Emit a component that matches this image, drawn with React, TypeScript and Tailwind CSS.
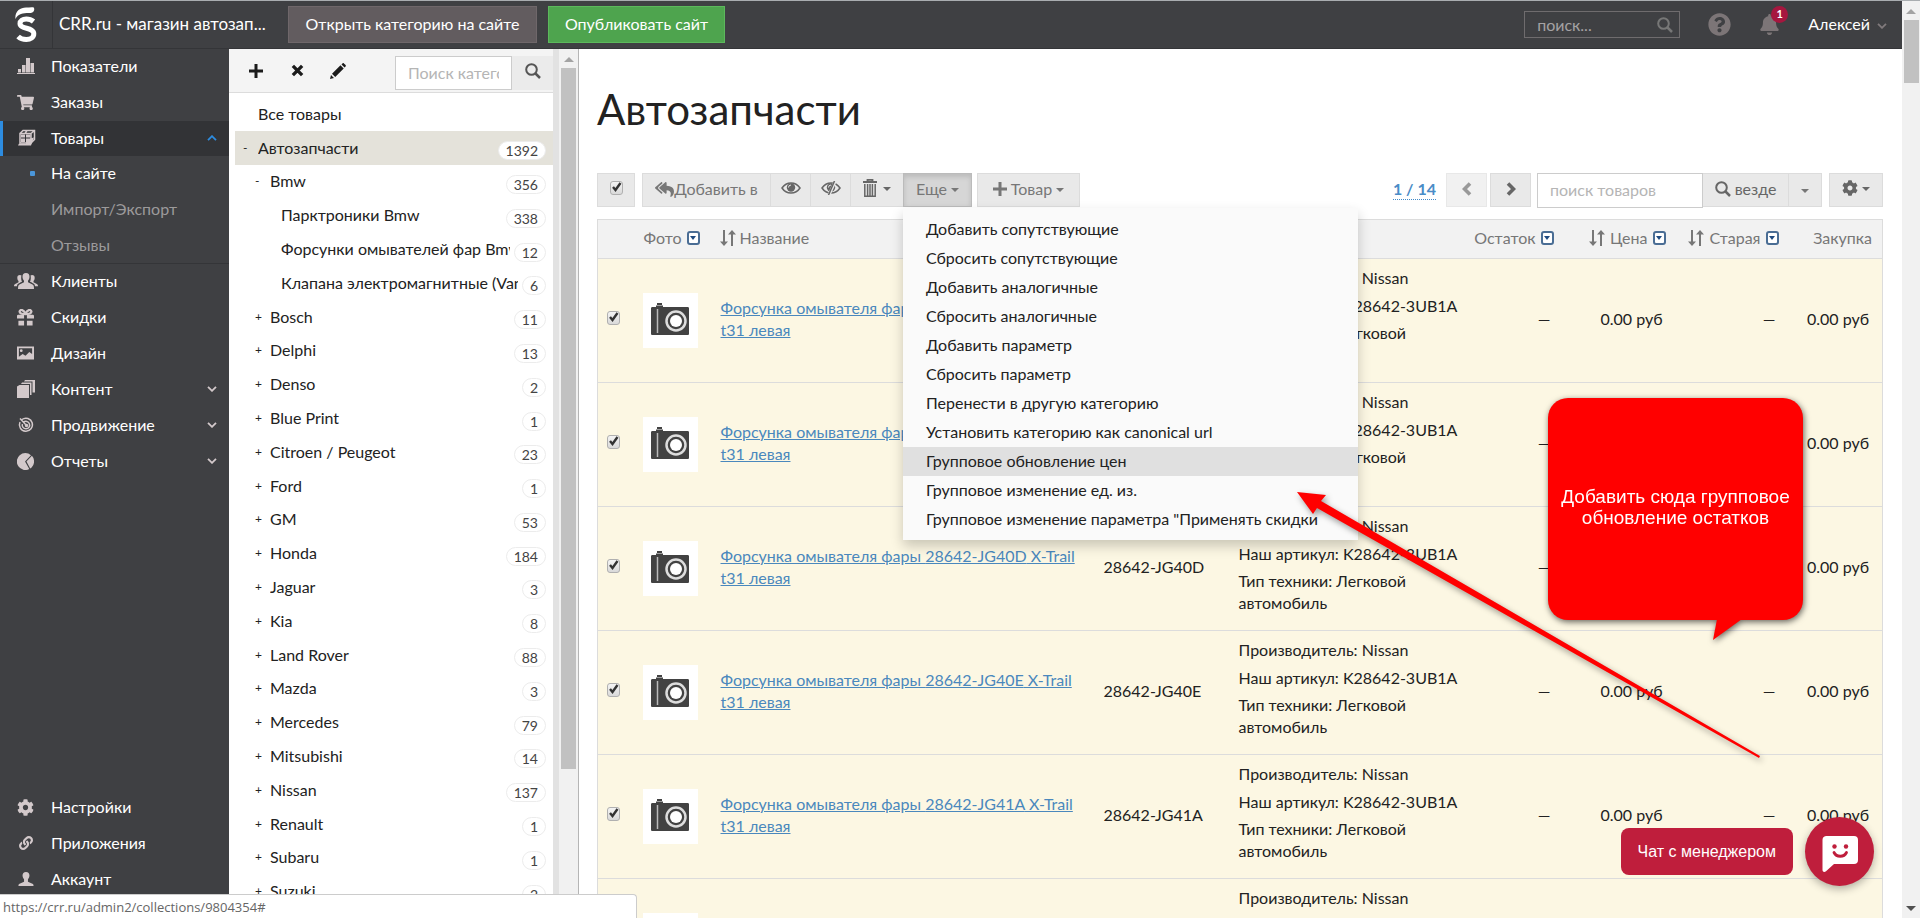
import type { ReactNode } from "react";
import { FaBell, FaCog, FaLink, FaQuestionCircle, FaReplyAll, FaShoppingCart } from "react-icons/fa";

type IconProps = { className?: string };

function Logo() {
  return (
    <svg viewBox="0 0 22 36" className="h-9 w-[22px]" fill="none" stroke="#fff">
      <path d="M.4 12C-.2 4.5 5 .6 11 .6c3 0 5.500-.8 7.800-.1 1.200 2.200 0 5.500-3 5.500C10 6 3.500 5.500.4 12Z" fill="#fff" stroke="none" />
      <path d="M18.500 14.500C16.500 12.800 13.800 12 11.300 12c-3.800 0-6.300 1.700-6.300 4.500 0 6.200 13.800 3.300 13.800 10.300 0 3.700-3.300 5.700-7.500 5.700-3.300 0-6.200-1-8.200-3" strokeWidth="5" />
    </svg>
  );
}

function BarsIcon({ className }: IconProps) {
  return (
    <svg viewBox="0 0 18 18" className={className} fill="currentColor">
      <path d="M0 16h18v1H0zM1 12h3v3.500H1zM5 8h3.500v7.500H5zM9 1h4v14.500H9zM13.500 6h3.500v9.500h-3.500z" />
    </svg>
  );
}

function BoxIcon({ className }: IconProps) {
  return (
    <svg viewBox="0 0 18 18" className={className} fill="none" stroke="currentColor">
      <path d="M2 4.500h11v9.500H2zM2 4.500l3-3h11.500v9l-3.500 3.500M13 4.500l3.500-3M9 1.500L7 4.500" strokeWidth="1.500" />
      <path d="M3 5.500h4v3H3zM8 5.500h4.500v3H8zM3 9.500h4v3.500H3zM8 9.500h4l4-1-3 8H0l1-2h7z" fill="currentColor" stroke="none" />
    </svg>
  );
}

function UsersIcon({ className }: IconProps) {
  return (
    <svg viewBox="0 0 24 16" className={className} fill="currentColor">
      <path d="M12 0c2.400 0 3.600 1.600 3.500 4-.1 1.700-.8 3-1.500 3.700v1.500l4.500 2.300c1 .6 1.500 1.500 1.500 4.500H4c0-3 .5-3.900 1.500-4.500L10 9.200V7.700C9.300 7 8.600 5.700 8.500 4 8.400 1.600 9.600 0 12 0Z" />
      <path d="M6 2C4.100 2 3.200 3.300 3.300 5c.1 1.500.6 2.500 1.200 3v1.200L1.200 11C.3 11.500 0 12 0 13.200h3C3.300 11 4 10.500 8 8.700 7 7 7 4 7.500 2.500ZM18 2c1.900 0 2.800 1.300 2.700 3-.1 1.500-.6 2.500-1.200 3v1.200l3.300 1.800c.9.500 1.200 1 1.200 2.200h-3c-.3-2.200-1-2.700-5-4.500 1-1.700 1-4.700.5-6.200Z" />
    </svg>
  );
}

function GiftIcon({ className }: IconProps) {
  return (
    <svg viewBox="0 0 18 18" className={className} fill="currentColor">
      <path d="M1.500 12.500h6v5h-6zM10.500 12.500h6v5h-6zM1 6h6.500v4H0V7zM10.500 6H17l1 1v3h-7.500z" />
      <path d="M9 5C7 .5 3.500 0 2.800 2.500 2.500 4.500 5 5.500 9 5.500ZM9 5c2-4.500 5.500-5 6.200-2.500C15.500 4.500 13 5.500 9 5.500Z" fill="none" stroke="currentColor" strokeWidth="2.400" />
    </svg>
  );
}

function PictureIcon({ className }: IconProps) {
  return (
    <svg viewBox="0 0 18 18" className={className} fill="currentColor">
      <path fillRule="evenodd" d="M0 2h18v14H0zM2 4v9l4-3 3 2 4-4 3 2V4zM4.500 5a1.500 1.500 0 1 1 0 3 1.500 1.500 0 0 1 0-3Z" />
    </svg>
  );
}

function StackIcon({ className }: IconProps) {
  return (
    <svg viewBox="0 0 18 18" className={className} fill="currentColor">
      <path d="M0 6.500L2.500 5H12v13H0zM4 4l1-1.500h9.500V15H13V4zM7 1.500L8 0h10v12.500h-2.500v-11z" />
    </svg>
  );
}

function TargetIcon({ className }: IconProps) {
  return (
    <svg viewBox="0 0 18 18" className={className} fill="none" stroke="currentColor" strokeWidth="1.500">
      <path d="M5 3.500A6.500 6.500 0 1 1 3 6M6.500 6.300A3.700 3.700 0 1 1 5.400 8M3 2.500l6.500 7" />
      <circle cx="9.500" cy="9.500" r="1" fill="currentColor" />
    </svg>
  );
}

function PieIcon({ className }: IconProps) {
  return (
    <svg viewBox="0 0 18 18" className={className} fill="currentColor">
      <path d="M8.500 9l4.500 8a9 9 0 1 1 1.800-14.700zM10 9l5.800-6A9 9 0 0 1 15.500 15.300l-1.500 1z" />
    </svg>
  );
}

function UserIcon({ className }: IconProps) {
  return (
    <svg viewBox="0 0 18 18" className={className} fill="currentColor">
      <path d="M9 1c2.600 0 4 1.700 3.900 4.200-.1 1.900-.9 3.400-1.700 4.200V12l5 2.300c1 .5 1.300 1.200 1.300 2.700H.5c0-1.500.3-2.200 1.300-2.700l5-2.300V9.400C6 8.600 5.200 7.100 5.100 5.200 5 2.700 6.400 1 9 1Z" />
    </svg>
  );
}

function PlusIcon({ className }: IconProps) {
  return (
    <svg viewBox="0 0 14 14" className={className} fill="none" stroke="currentColor" strokeWidth="3">
      <path d="M7 0v14M0 7h14" />
    </svg>
  );
}

function CrossIcon({ className }: IconProps) {
  return (
    <svg viewBox="0 0 14 14" className={className} fill="none" stroke="currentColor" strokeWidth="3.600">
      <path d="M2 2l10 10M12 2L2 12" />
    </svg>
  );
}

function PencilIcon({ className }: IconProps) {
  return (
    <svg viewBox="0 0 16 16" className={className} fill="currentColor">
      <path d="M0 16l1-4 3 3zM2 10.700l8.500-8.400 3.200 3.200L5.200 14zM11.500 1.500l1-1c.4-.5 1-.5 1.400-.1l1.700 1.700c.4.400.4 1 0 1.400l-1 1z" />
    </svg>
  );
}

function SearchIcon({ className }: IconProps) {
  return (
    <svg viewBox="0 0 16 16" className={className} fill="none" stroke="currentColor" strokeWidth="2">
      <circle cx="6.500" cy="6.500" r="5.300" />
      <path d="M10.500 10.500l4.500 4.500" strokeWidth="2.500" />
    </svg>
  );
}

function EyeIcon({ className, off }: IconProps & { off?: boolean }) {
  return (
    <svg viewBox="0 0 20 14" className={className} fill="none" stroke="currentColor">
      <path d="M1 7c4.500-6.700 13.500-6.700 18 0-4.500 6.700-13.500 6.700-18 0Z" strokeWidth="1.500" />
      <circle cx="10" cy="6.500" r="4.200" fill="currentColor" stroke="none" />
      <path d="M7.500 6.500A2.500 2.500 0 0 1 10 4" stroke="#e9e9e9" />
      {off && <path d="M14.300 0L8 14" stroke="#e9e9e9" strokeWidth="3" />}
      {off && <path d="M13.500 0L7.500 14" strokeWidth="1.500" />}
    </svg>
  );
}

function TrashIcon({ className }: IconProps) {
  return (
    <svg viewBox="0 0 14 18" className={className} fill="none" stroke="currentColor">
      <path d="M0 3h14M4.500 2.500V.8h5v1.700" strokeWidth="1.800" />
      <path d="M1.800 5v12.200h10.400V5M4.600 5v12M7 5v12M9.400 5v12" strokeWidth="1.500" />
    </svg>
  );
}

function SortIcon() {
  return (
    <svg viewBox="0 0 16 18" className="h-[18px] w-4" fill="none" stroke="currentColor" strokeWidth="2">
      <path d="M4 1v13M12 17V4" />
      <path d="M0 12.500h8L4 17zM8 5.500h8L12 1z" fill="currentColor" stroke="none" />
    </svg>
  );
}

function Chevron({ className }: IconProps) {
  return (
    <svg viewBox="0 0 10 6" className={className} fill="none" stroke="currentColor" strokeWidth="1.800">
      <path d="M1 .8l4 4 4-4" />
    </svg>
  );
}

function PageArrow({ className }: IconProps) {
  return (
    <svg viewBox="0 0 10 14" className={className} fill="none" stroke="currentColor" strokeWidth="3.600">
      <path d="M2 1.500L7.500 7 2 12.500" />
    </svg>
  );
}

function Caret() {
  return (
    <svg viewBox="0 0 8 4" className="mt-0.5 h-1 w-2" fill="currentColor">
      <path d="M0 0h8L4 4z" />
    </svg>
  );
}

function CameraIcon() {
  return (
    <svg viewBox="0 0 38 34" className="h-[34px] w-[38px]">
      <path d="M6 1h5v2H6zM5 3.500h7V6H5zM1.500 5h35C37.500 5 38 5.500 38 6.500v25c0 1-.5 1.500-1.500 1.500h-35C.5 33 0 32.500 0 31.500v-25C0 5.500.5 5 1.500 5Z" fill="#424242" />
      <path d="M6.500 7v24" stroke="#bbb" strokeWidth="1.500" />
      <circle cx="25" cy="19" r="9.500" fill="none" stroke="#ddd" strokeWidth="2.500" />
      <circle cx="25" cy="19" r="6" fill="#fff" />
    </svg>
  );
}

function CheckBox({ label }: { label: string }) {
  return (
    <label className="relative block h-[14px] w-[13px]">
      <input
        type="checkbox"
        defaultChecked
        aria-label={label}
        className="peer block h-[14px] w-[13px] appearance-none rounded-[3px] border border-[#b0b0b0] bg-gradient-to-b from-[#f4f4f4] to-[#d9d9d9]"
      />
      <svg viewBox="0 0 12 12" className="absolute top-0 left-0 hidden h-3 w-3 peer-checked:block" fill="none" stroke="#333" strokeWidth="2.400">
        <path d="M3 6l2.500 3L10.500 2" />
      </svg>
    </label>
  );
}

function FilterButton({ label }: { label: string }) {
  return (
    <button aria-label={label} className="flex h-[14px] w-[13px] items-center justify-center rounded-[3px] border-2 border-[#4a6d94] bg-white text-[#1f4a80]">
      <svg viewBox="0 0 6 4" className="h-1 w-1.5" fill="currentColor">
        <path d="M0 0h6L3 4z" />
      </svg>
    </button>
  );
}

type MenuItem = {
  label: string;
  icon: ReactNode;
  arrow?: boolean;
};

const MAIN_MENU: MenuItem[] = [
  { label: "Клиенты", icon: <UsersIcon className="h-4 w-6" /> },
  { label: "Скидки", icon: <GiftIcon className="h-[17px] w-[17px]" /> },
  { label: "Дизайн", icon: <PictureIcon className="h-[18px] w-[17px]" /> },
  { label: "Контент", icon: <StackIcon className="h-[18px] w-[18px]" />, arrow: true },
  { label: "Продвижение", icon: <TargetIcon className="h-[18px] w-[18px]" />, arrow: true },
  { label: "Отчеты", icon: <PieIcon className="h-[17px] w-[17px]" />, arrow: true },
];

const BOTTOM_MENU: MenuItem[] = [
  { label: "Настройки", icon: <FaCog size={17} /> },
  { label: "Приложения", icon: <FaLink size={14} /> },
  { label: "Аккаунт", icon: <UserIcon className="h-4 w-4" /> },
];

const CATEGORIES = [
  { name: "Все товары", level: 0, toggle: "", count: "" },
  { name: "Автозапчасти", level: 0, toggle: "-", count: "1392" },
  { name: "Bmw", level: 1, toggle: "-", count: "356" },
  { name: "Парктроники Bmw", level: 2, toggle: "", count: "338" },
  { name: "Форсунки омывателей фар Bmw", level: 2, toggle: "", count: "12" },
  { name: "Клапана электромагнитные (Vanos)", level: 2, toggle: "", count: "6" },
  { name: "Bosch", level: 1, toggle: "+", count: "11" },
  { name: "Delphi", level: 1, toggle: "+", count: "13" },
  { name: "Denso", level: 1, toggle: "+", count: "2" },
  { name: "Blue Print", level: 1, toggle: "+", count: "1" },
  { name: "Citroen / Peugeot", level: 1, toggle: "+", count: "23" },
  { name: "Ford", level: 1, toggle: "+", count: "1" },
  { name: "GM", level: 1, toggle: "+", count: "53" },
  { name: "Honda", level: 1, toggle: "+", count: "184" },
  { name: "Jaguar", level: 1, toggle: "+", count: "3" },
  { name: "Kia", level: 1, toggle: "+", count: "8" },
  { name: "Land Rover", level: 1, toggle: "+", count: "88" },
  { name: "Mazda", level: 1, toggle: "+", count: "3" },
  { name: "Mercedes", level: 1, toggle: "+", count: "79" },
  { name: "Mitsubishi", level: 1, toggle: "+", count: "14" },
  { name: "Nissan", level: 1, toggle: "+", count: "137" },
  { name: "Renault", level: 1, toggle: "+", count: "1" },
  { name: "Subaru", level: 1, toggle: "+", count: "1" },
  { name: "Suzuki", level: 1, toggle: "+", count: "2" },
];

const LEVEL_INDENT = ["pl-2", "pl-5", "pl-[31px]"];

const ACTIONS = [
  "Добавить сопутствующие",
  "Сбросить сопутствующие",
  "Добавить аналогичные",
  "Сбросить аналогичные",
  "Добавить параметр",
  "Сбросить параметр",
  "Перенести в другую категорию",
  "Установить категорию как canonical url",
  "Групповое обновление цен",
  "Групповое изменение ед. из.",
  'Групповое изменение параметра "Применять скидки',
];
const ACTIVE_ACTION = "Групповое обновление цен";

const PRODUCTS = ["28642-JG40B", "28642-JG40C", "28642-JG40D", "28642-JG40E", "28642-JG41A", "28642-JG41B"];

function TopBar() {
  return (
    <header className="flex h-[49px] shrink-0 items-center border-t border-b border-t-[#a9adb0] border-b-[#343538] bg-[#3f4043] text-white">
      <div className="flex h-full w-[53px] shrink-0 items-center justify-center border-r border-[#343538]">
        <Logo />
      </div>
      <div className="ml-1.5 w-[213px] pb-0.5 text-[17px] whitespace-nowrap">CRR.ru - магазин автозап...</div>
      <button className="ml-4 h-[37px] w-[249px] border border-[#6f676a] bg-[#625c5f] pb-0.5">Открыть категорию на сайте</button>
      <button className="ml-[11px] h-[37px] w-[177px] border border-[#5cb85c] bg-[#4ea44e] pb-0.5">Опубликовать сайт</button>
      <div className="ml-auto flex h-[27px] w-[156px] items-center border border-[#6f6c6e] pr-1.5 pl-3">
        <input type="text" aria-label="Поиск" placeholder="поиск..." className="min-w-0 flex-1 bg-transparent outline-none placeholder:text-[#a5a2a4]" />
        <SearchIcon className="h-4 w-4 text-[#777]" />
      </div>
      <button aria-label="Помощь" className="ml-7 text-[#7c7577]">
        <FaQuestionCircle size={23} />
      </button>
      <button aria-label="Уведомления" className="relative ml-7 text-[#7c7577]">
        <FaBell size={21} />
        <span className="absolute -top-2 left-3 flex h-[17px] w-[17px] items-center justify-center rounded-full bg-[#a6173f] text-[11px] font-bold text-white">1</span>
      </button>
      <button className="mr-[15px] ml-7 flex items-center gap-[7px] pb-0.5">
        Алексей
        <Chevron className="mt-1 h-[6px] w-[10px] text-[#807a7c]" />
      </button>
    </header>
  );
}

function MenuRow({ item }: { item: MenuItem }) {
  return (
    <a href="#" className="flex h-9 items-center pr-3 pb-0.5 text-white">
      <span className="flex w-[51px] justify-center text-[#d3c9cb]">{item.icon}</span>
      <span className="flex-1">{item.label}</span>
      {item.arrow && <Chevron className="h-[6px] w-[10px] text-[#d3c9cb]" />}
    </a>
  );
}

function Sidebar() {
  return (
    <nav className="flex w-[229px] shrink-0 flex-col bg-[#3f4043]">
      <MenuRow item={{ label: "Показатели", icon: <BarsIcon className="h-[18px] w-[18px]" /> }} />
      <MenuRow item={{ label: "Заказы", icon: <FaShoppingCart size={17} /> }} />
      <a href="#" className="flex h-[35px] items-center border-l-[3px] border-[#2d8ce0] bg-[#323336] pr-3 pb-0.5 text-white">
        <span className="flex w-12 justify-center text-[#d3c9cb]">
          <BoxIcon className="h-[18px] w-[18px]" />
        </span>
        <span className="flex-1">Товары</span>
        <Chevron className="h-[6px] w-[10px] rotate-180 text-[#2d8ce0]" />
      </a>
      <a href="#" className="flex h-9 items-center pb-0.5 text-white">
        <span className="mr-4 ml-[30px] h-[5px] w-[5px] rounded-[1px] bg-[#4a96da]" />
        На сайте
      </a>
      <a href="#" className="flex h-9 items-center pb-0.5 pl-[51px] text-[#9c9a9b]">Импорт/Экспорт</a>
      <a href="#" className="flex h-9 items-center border-b border-[#343538] pb-0.5 pl-[51px] text-[#9c9a9b]">Отзывы</a>
      {MAIN_MENU.map((item) => (
        <MenuRow key={item.label} item={item} />
      ))}
      <div className="mt-auto pb-5">
        {BOTTOM_MENU.map((item) => (
          <MenuRow key={item.label} item={item} />
        ))}
      </div>
    </nav>
  );
}

function CategoryPanel() {
  return (
    <aside className="flex w-[350px] shrink-0 overflow-hidden border-r border-[#b5b5b5]">
      <div className="flex min-w-0 flex-1 flex-col">
        <div className="flex h-11 shrink-0 items-center border-b border-[#dcdcdc] bg-[#f4f4f4] pl-5 text-[#1b1b1b]">
          <button aria-label="Добавить категорию">
            <PlusIcon className="h-[14px] w-[14px]" />
          </button>
          <button aria-label="Удалить категорию" className="ml-7">
            <CrossIcon className="h-[13px] w-[13px]" />
          </button>
          <button aria-label="Изменить категорию" className="ml-[26px]">
            <PencilIcon className="h-4 w-4" />
          </button>
          <input
            type="text"
            aria-label="Поиск категории"
            placeholder="Поиск категории"
            className="mt-1 ml-auto h-[34px] w-[117px] border border-[#ccc] bg-white px-3 outline-none placeholder:text-[#b5b5b5]"
          />
          <button aria-label="Искать" className="mt-1 flex h-[34px] w-[41px] items-center justify-center bg-[#ebebeb] pb-1 text-[#555]">
            <SearchIcon className="h-4 w-4" />
          </button>
        </div>
        <ul className="mt-1 grid h-[811px] shrink-0 auto-rows-fr grid-cols-1 pl-1.5 text-[#222]">
          {CATEGORIES.map((category) => (
            <li
              key={category.name}
              className={`flex items-center pr-[7px] ${LEVEL_INDENT[category.level]} ${
                category.name === "Автозапчасти" ? "bg-[#e4e2da]" : ""
              }`}
            >
              <span className="w-[15px] shrink-0 text-xs">{category.toggle}</span>
              <a href="#" className="min-w-0 flex-1 overflow-hidden whitespace-nowrap">
                {category.name}
              </a>
              {category.count && (
                <span className="mt-1.5 ml-1 rounded-full border border-[#ececec] bg-white px-[7px] text-sm leading-[17px] text-[#444]">
                  {category.count}
                </span>
              )}
            </li>
          ))}
        </ul>
      </div>
      <div className="w-1.5 bg-[#e2e2e2]" />
      <div className="flex w-[19px] flex-col items-center bg-[#f1f1f1]">
        <svg viewBox="0 0 10 5" className="mt-2 mb-1.5 h-[5px] w-[10px]" fill="#a3a3a3">
          <path d="M0 5h10L5 0z" />
        </svg>
        <div className="h-[701px] w-[15px] bg-[#c1c1c1]" />
      </div>
    </aside>
  );
}

function ActionMenu() {
  return (
    <ul className="absolute top-[35px] left-0 z-10 w-[455px] bg-[#fafafa] pt-[7px] pb-1.5 text-left text-[#222] shadow-[0_6px_12px_rgba(0,0,0,0.2)]">
      {ACTIONS.map((action) => (
        <li key={action}>
          <a href="#" className={`block h-[29px] pl-[23px] leading-[27px] whitespace-nowrap ${action === ACTIVE_ACTION ? "bg-[#e0e0e0]" : ""}`}>
            {action}
          </a>
        </li>
      ))}
    </ul>
  );
}

function Toolbar() {
  return (
    <div className="flex h-[34px] items-stretch text-[#777]">
      <div className="flex w-[38px] items-center justify-center border border-[#dcdcdc] bg-[#e9e9e9] pb-1">
        <CheckBox label="Выбрать все" />
      </div>
      <div className="ml-[7px] flex border border-r-0 border-[#dcdcdc] bg-[#e9e9e9]">
        <button className="flex w-[127px] items-center justify-center pb-0.5">
          <FaReplyAll size={19} />
          Добавить в
        </button>
        <button aria-label="Показать" className="flex w-10 items-center justify-center border-l border-[#dcdcdc] pb-1 text-[#666]">
          <EyeIcon className="h-[14px] w-5" />
        </button>
        <button aria-label="Скрыть" className="flex w-10 items-center justify-center border-l border-[#dcdcdc] pb-1 text-[#666]">
          <EyeIcon off className="h-[14px] w-5" />
        </button>
        <button aria-label="Удалить" className="flex w-[53px] items-center justify-center gap-1.5 border-l border-[#dcdcdc] pb-1 text-[#666]">
          <TrashIcon className="h-[18px] w-[14px]" />
          <Caret />
        </button>
      </div>
      <div className="relative">
        <button className="flex h-full w-[69px] items-center justify-center gap-1 border border-[#bbb] bg-[#d6d6d6] pb-0.5 shadow-[inset_0_3px_5px_rgba(0,0,0,0.125)]">
          Еще
          <Caret />
        </button>
        <ActionMenu />
      </div>
      <button className="ml-[5px] flex w-[103px] items-center justify-center gap-1 border border-[#dcdcdc] bg-[#e9e9e9] pb-0.5">
        <PlusIcon className="h-[14px] w-[14px]" />
        Товар
        <Caret />
      </button>

      <div className="ml-auto flex items-center pb-0.5">
        <a href="#" className="border-b border-dotted border-[#428bca] leading-5 font-bold text-[#4a8cc7]">1 / 14</a>
      </div>
      <button aria-label="Назад" className="ml-2.5 flex w-[41px] items-center justify-center border border-[#e8e8e8] bg-[#f1f1f1] pb-0.5 text-[#999]">
        <PageArrow className="h-[14px] w-[10px] rotate-180" />
      </button>
      <button aria-label="Вперед" className="ml-[3px] flex w-[41px] items-center justify-center border border-[#dcdcdc] bg-[#e9e9e9] pb-0.5 text-[#666]">
        <PageArrow className="h-[14px] w-[10px]" />
      </button>
      <input
        type="text"
        aria-label="Поиск товаров"
        placeholder="поиск товаров"
        className="ml-1.5 h-[35px] w-[166px] border border-[#ccc] bg-white px-3 pb-0.5 outline-none placeholder:text-[#b5b5b5]"
      />
      <button className="flex w-[85px] items-center justify-center gap-1 border-y border-[#dcdcdc] bg-[#e9e9e9] pb-0.5 text-[#666]">
        <SearchIcon className="h-4 w-4" />
        везде
      </button>
      <button aria-label="Где искать" className="flex w-[34px] items-center justify-center border border-[#dcdcdc] bg-[#e9e9e9]">
        <Caret />
      </button>
      <button aria-label="Настройки таблицы" className="ml-[7px] flex w-[54px] items-center justify-center gap-1 border border-[#dcdcdc] bg-[#e9e9e9] pb-1 text-[#666]">
        <FaCog size={16} />
        <Caret />
      </button>
    </div>
  );
}

function ProductTable() {
  return (
    <table className="mt-3 w-full table-fixed border border-[#dcdcdc]">
      <colgroup>
        <col className="w-[42px]" />
        <col className="w-[70px]" />
        <col />
        <col className="w-[135px]" />
        <col className="w-[235px]" />
        <col className="w-[101px]" />
        <col className="w-[112px]" />
        <col className="w-[113px]" />
        <col className="w-[94px]" />
      </colgroup>
      <thead>
        <tr className="h-[39px] border-b border-[#dcdcdc] bg-[#f2f2f2] text-[#777]">
          <th colSpan={2} className="pr-2.5 pb-0.5 font-normal">
            <div className="flex items-center justify-end gap-[5px]">
              Фото
              <FilterButton label="Фильтр по фото" />
            </div>
          </th>
          <th className="pb-0.5 pl-2.5 font-normal">
            <div className="flex items-center gap-1">
              <SortIcon />
              Название
            </div>
          </th>
          <th />
          <th />
          <th className="pr-2.5 pb-0.5 font-normal">
            <div className="flex items-center justify-end gap-[5px]">
              Остаток
              <FilterButton label="Фильтр по остатку" />
            </div>
          </th>
          <th className="pr-2.5 pb-0.5 font-normal">
            <div className="flex items-center justify-end gap-[5px]">
              <SortIcon />
              Цена
              <FilterButton label="Фильтр по цене" />
            </div>
          </th>
          <th className="pr-2.5 pb-0.5 font-normal">
            <div className="flex items-center justify-end gap-[5px]">
              <SortIcon />
              Старая
              <FilterButton label="Фильтр по старой цене" />
            </div>
          </th>
          <th className="pr-2.5 pb-0.5 text-right font-normal">Закупка</th>
        </tr>
      </thead>
      <tbody>
        {PRODUCTS.map((sku) => (
          <tr key={sku} className="h-[124px] border-b border-[#dcdcdc] bg-[#fcf7e3] text-[#222]">
            <td className="pb-1.5 pl-[9px]">
              <CheckBox label={sku} />
            </td>
            <td className="pl-[3px]">
              <div className="flex h-[55px] w-[55px] items-center justify-center bg-white pb-1">
                <CameraIcon />
              </div>
            </td>
            <td className="pr-2 pb-1 pl-[11px] leading-[22px]">
              <a href="#" className="text-[#4a88bd] underline">
                Форсунка омывателя фары {sku} X-Trail t31 левая
              </a>
            </td>
            <td className="pb-1 pl-[11px]">{sku}</td>
            <td className="pt-2 pl-[11px] align-top leading-[22px]">
              <p className="mb-1.5">Производитель: Nissan</p>
              <p className="mb-[5px] whitespace-nowrap">Наш артикул: K28642-3UB1A</p>
              <p>
                Тип техники: Легковой
                <br />
                автомобиль
              </p>
            </td>
            <td className="pr-[13px] pb-1 text-right">—</td>
            <td className="pr-[13px] pb-1 text-right">0.00 руб</td>
            <td className="pr-[13px] pb-1 text-right">—</td>
            <td className="pr-[13px] pb-1 text-right">0.00 руб</td>
          </tr>
        ))}
      </tbody>
    </table>
  );
}

function PageScrollbar() {
  return (
    <div className="flex w-[18px] shrink-0 flex-col items-center border-t border-[#a9adb0] bg-[#f1f1f1]">
      <svg viewBox="0 0 10 5" className="mt-2 mb-1.5 h-[5px] w-[10px]" fill="#a3a3a3">
        <path d="M0 5h10L5 0z" />
      </svg>
      <div className="h-[63px] w-[15px] bg-[#c1c1c1]" />
      <svg viewBox="0 0 10 5" className="mt-auto mb-[7px] h-[5px] w-[10px]" fill="#505050">
        <path d="M0 0h10L5 5z" />
      </svg>
    </div>
  );
}

function Annotations() {
  return (
    <>
      <svg viewBox="0 0 480 280" className="absolute top-[487px] right-[150px] z-20 h-[280px] w-[480px] drop-shadow-[2px_3px_3px_rgba(0,0,0,0.4)]">
        <path d="M7 5l29 3-5 6L470 269l-1 2L27 21l-4 6z" fill="#f00" />
      </svg>
      <div className="absolute top-[398px] right-[117px] z-20 drop-shadow-[1px_2px_3px_rgba(0,0,0,0.6)]">
        <div className="flex h-[222px] w-[255px] items-center justify-center rounded-[20px] bg-[#f00] px-2 pb-1 text-center font-['Liberation_Sans',sans-serif] text-[19px] leading-[21px] text-white">
          Добавить сюда групповое обновление остатков
        </div>
        <svg viewBox="0 0 30 22" className="absolute top-[221px] left-[164px] h-[22px] w-[30px]">
          <path d="M5 0h25L1 21z" fill="#f00" />
        </svg>
      </div>
    </>
  );
}

function ChatWidget() {
  return (
    <div className="absolute right-[46px] bottom-8 z-30 flex items-center gap-3">
      <button className="h-[47px] rounded-lg bg-[#bf1e3c] px-[17px] font-['Liberation_Sans',sans-serif] text-base text-white">
        Чат с менеджером
      </button>
      <button aria-label="Открыть чат" className="flex h-[69px] w-[69px] items-center justify-center rounded-full bg-[#bf1e3c] shadow-[0_3px_8px_rgba(0,0,0,0.3)]">
        <svg viewBox="0 0 36 36" className="mt-1 h-9 w-9">
          <path d="M4 0h28a4 4 0 0 1 4 4v20a4 4 0 0 1-4 4H12l-8 7.300C2.500 36.500.5 36 .5 34V4A4 4 0 0 1 4 0Z" fill="#fff" />
          <circle cx="12.500" cy="10.500" r="2.200" fill="#bf1e3c" />
          <circle cx="24" cy="10.500" r="2.200" fill="#bf1e3c" />
          <path d="M12 16.500c2.500 5 10 5 12.500 0" fill="none" stroke="#bf1e3c" strokeWidth="2.800" strokeLinecap="round" />
        </svg>
      </button>
    </div>
  );
}

export default function App() {
  return (
    <div className="relative flex h-screen overflow-hidden bg-white font-[Lato,'Open_Sans',sans-serif] text-base">
      <div className="flex min-w-0 flex-1 flex-col">
        <TopBar />
        <div className="flex min-h-0 flex-1">
          <Sidebar />
          <CategoryPanel />
          <main className="min-w-0 flex-1 overflow-hidden pr-[19px] pl-[18px]">
            <h1 className="pt-9 pb-10 text-[42px] leading-[48px] text-[#222]">Автозапчасти</h1>
            <Toolbar />
            <ProductTable />
          </main>
        </div>
      </div>
      <PageScrollbar />
      <Annotations />
      <ChatWidget />
      <div className="absolute bottom-0 left-0 z-30 h-6 w-[637px] rounded-tr border-t border-r border-[#ccc] bg-white pl-[3px] font-['Open_Sans',sans-serif] text-[13px] leading-6 text-[#666]">
        https://crr.ru/admin2/collections/9804354#
      </div>
    </div>
  );
}
